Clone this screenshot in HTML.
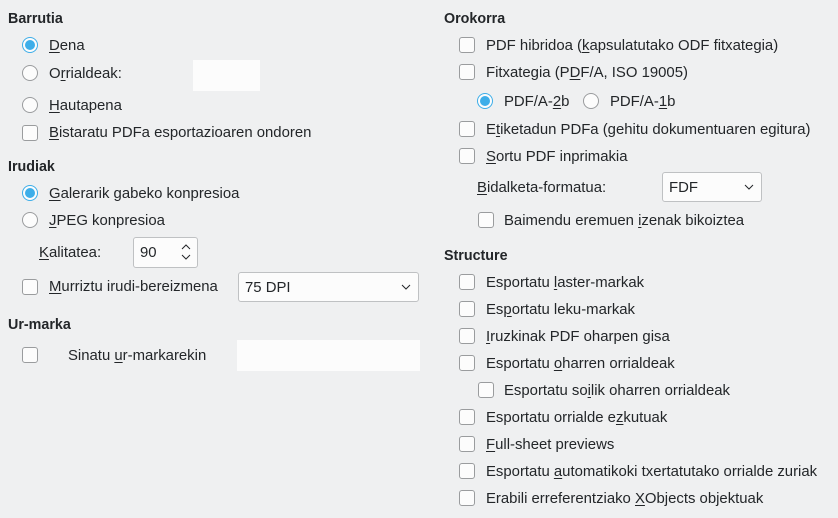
<!DOCTYPE html>
<html><head><meta charset="utf-8"><style>
body{margin:0;width:838px;height:518px;background:#eff0f1;font-family:"Liberation Sans","DejaVu Sans",sans-serif;font-size:14.9px;color:#232629;position:relative;overflow:hidden}
.t{position:absolute;line-height:20px;white-space:nowrap}
.h{font-weight:bold;font-size:14.3px}
.cb{position:absolute;width:14px;height:14px;border:1px solid #9a9c9e;border-radius:3px;background:#fcfcfc}
.rb{position:absolute;width:14px;height:14px;border:1px solid #9a9c9e;border-radius:50%;background:#fcfcfc}
.rb.on{border-color:#3daee9;background:#fcfcfc}
.rb.on::after{content:"";position:absolute;left:2px;top:2px;width:10px;height:10px;border-radius:50%;background:#3daee9}
u{text-decoration:underline;text-underline-offset:2px}
.box{position:absolute;background:#fcfcfc;border:1px solid #bfc1c3;border-radius:3px;box-sizing:border-box}
.plain{position:absolute;background:#fcfcfc}
</style></head><body>
<div class="t h" style="left:8px;top:9px">Barrutia</div>
<div class="rb on" style="left:22px;top:37px"></div><div class="t" style="left:49px;top:36px"><u>D</u>ena</div>
<div class="rb" style="left:22px;top:65px"></div><div class="t" style="left:49px;top:64px">O<u>r</u>rialdeak:</div>
<div class="plain" style="left:193px;top:60px;width:67px;height:31px"></div>
<div class="rb" style="left:22px;top:97px"></div><div class="t" style="left:49px;top:96px"><u>H</u>autapena</div>
<div class="cb" style="left:22px;top:125px"></div><div class="t" style="left:49px;top:123px"><u>B</u>istaratu PDFa esportazioaren ondoren</div>
<div class="t h" style="left:8px;top:157px">Irudiak</div>
<div class="rb on" style="left:22px;top:185px"></div><div class="t" style="left:49px;top:184px"><u>G</u>alerarik gabeko konpresioa</div>
<div class="rb" style="left:22px;top:212px"></div><div class="t" style="left:49px;top:211px"><u>J</u>PEG konpresioa</div>
<div class="t" style="left:39px;top:243px"><u>K</u>alitatea:</div>
<div class="box" style="left:133px;top:237px;width:65px;height:31px"></div>
<div class="t" style="left:140px;top:243px">90</div>
<svg style="position:absolute;left:180px;top:240px" width="12" height="24"><path d="M2 9 L6 5 L10 9 M2 15 L6 19 L10 15" fill="none" stroke="#232629" stroke-width="1"/></svg>
<div class="cb" style="left:22px;top:279px"></div><div class="t" style="left:49px;top:277px"><u>M</u>urriztu irudi-bereizmena</div>
<div class="box" style="left:238px;top:272px;width:181px;height:30px"></div>
<div class="t" style="left:245px;top:278px">75 DPI</div>
<svg style="position:absolute;left:400px;top:282px" width="12" height="10"><path d="M2 3 L6 7 L10 3" fill="none" stroke="#232629"/></svg>
<div class="t h" style="left:8px;top:315px">Ur-marka</div>
<div class="cb" style="left:22px;top:347px"></div><div class="t" style="left:68px;top:346px">Sinatu <u>u</u>r-markarekin</div>
<div class="plain" style="left:237px;top:340px;width:183px;height:31px"></div>

<div class="t h" style="left:444px;top:9px">Orokorra</div>
<div class="cb" style="left:459px;top:37px"></div><div class="t" style="left:486px;top:36px">PDF hibridoa (<u>k</u>apsulatutako ODF fitxategia)</div>
<div class="cb" style="left:459px;top:64px"></div><div class="t" style="left:486px;top:63px">Fitxategia (P<u>D</u>F/A, ISO 19005)</div>
<div class="rb on" style="left:477px;top:93px"></div><div class="t" style="left:504px;top:92px">PDF/A-<u>2</u>b</div>
<div class="rb" style="left:583px;top:93px"></div><div class="t" style="left:610px;top:92px">PDF/A-<u>1</u>b</div>
<div class="cb" style="left:459px;top:121px"></div><div class="t" style="left:486px;top:120px">E<u>t</u>iketadun PDFa (gehitu dokumentuaren egitura)</div>
<div class="cb" style="left:459px;top:148px"></div><div class="t" style="left:486px;top:147px"><u>S</u>ortu PDF inprimakia</div>
<div class="t" style="left:477px;top:178px"><u>B</u>idalketa-formatua:</div>
<div class="box" style="left:662px;top:172px;width:100px;height:30px"></div>
<div class="t" style="left:669px;top:178px">FDF</div>
<svg style="position:absolute;left:743px;top:182px" width="12" height="10"><path d="M2 3 L6 7 L10 3" fill="none" stroke="#232629"/></svg>
<div class="cb" style="left:478px;top:212px"></div><div class="t" style="left:504px;top:211px">Baimendu eremuen <u>i</u>zenak bikoiztea</div>
<div class="t h" style="left:444px;top:246px">Structure</div>
<div class="cb" style="left:459px;top:274px"></div><div class="t" style="left:486px;top:273px">Esportatu <u>l</u>aster-markak</div>
<div class="cb" style="left:459px;top:301px"></div><div class="t" style="left:486px;top:300px">Es<u>p</u>ortatu leku-markak</div>
<div class="cb" style="left:459px;top:328px"></div><div class="t" style="left:486px;top:327px"><u>I</u>ruzkinak PDF oharpen gisa</div>
<div class="cb" style="left:459px;top:355px"></div><div class="t" style="left:486px;top:354px">Esportatu <u>o</u>harren orrialdeak</div>
<div class="cb" style="left:478px;top:382px"></div><div class="t" style="left:504px;top:381px">Esportatu so<u>i</u>lik oharren orrialdeak</div>
<div class="cb" style="left:459px;top:409px"></div><div class="t" style="left:486px;top:408px">Esportatu orrialde e<u>z</u>kutuak</div>
<div class="cb" style="left:459px;top:436px"></div><div class="t" style="left:486px;top:435px"><u>F</u>ull-sheet previews</div>
<div class="cb" style="left:459px;top:463px"></div><div class="t" style="left:486px;top:462px">Esportatu <u>a</u>utomatikoki txertatutako orrialde zuriak</div>
<div class="cb" style="left:459px;top:490px"></div><div class="t" style="left:486px;top:489px">Erabili erreferentziako <u>X</u>Objects objektuak</div>
</body></html>
